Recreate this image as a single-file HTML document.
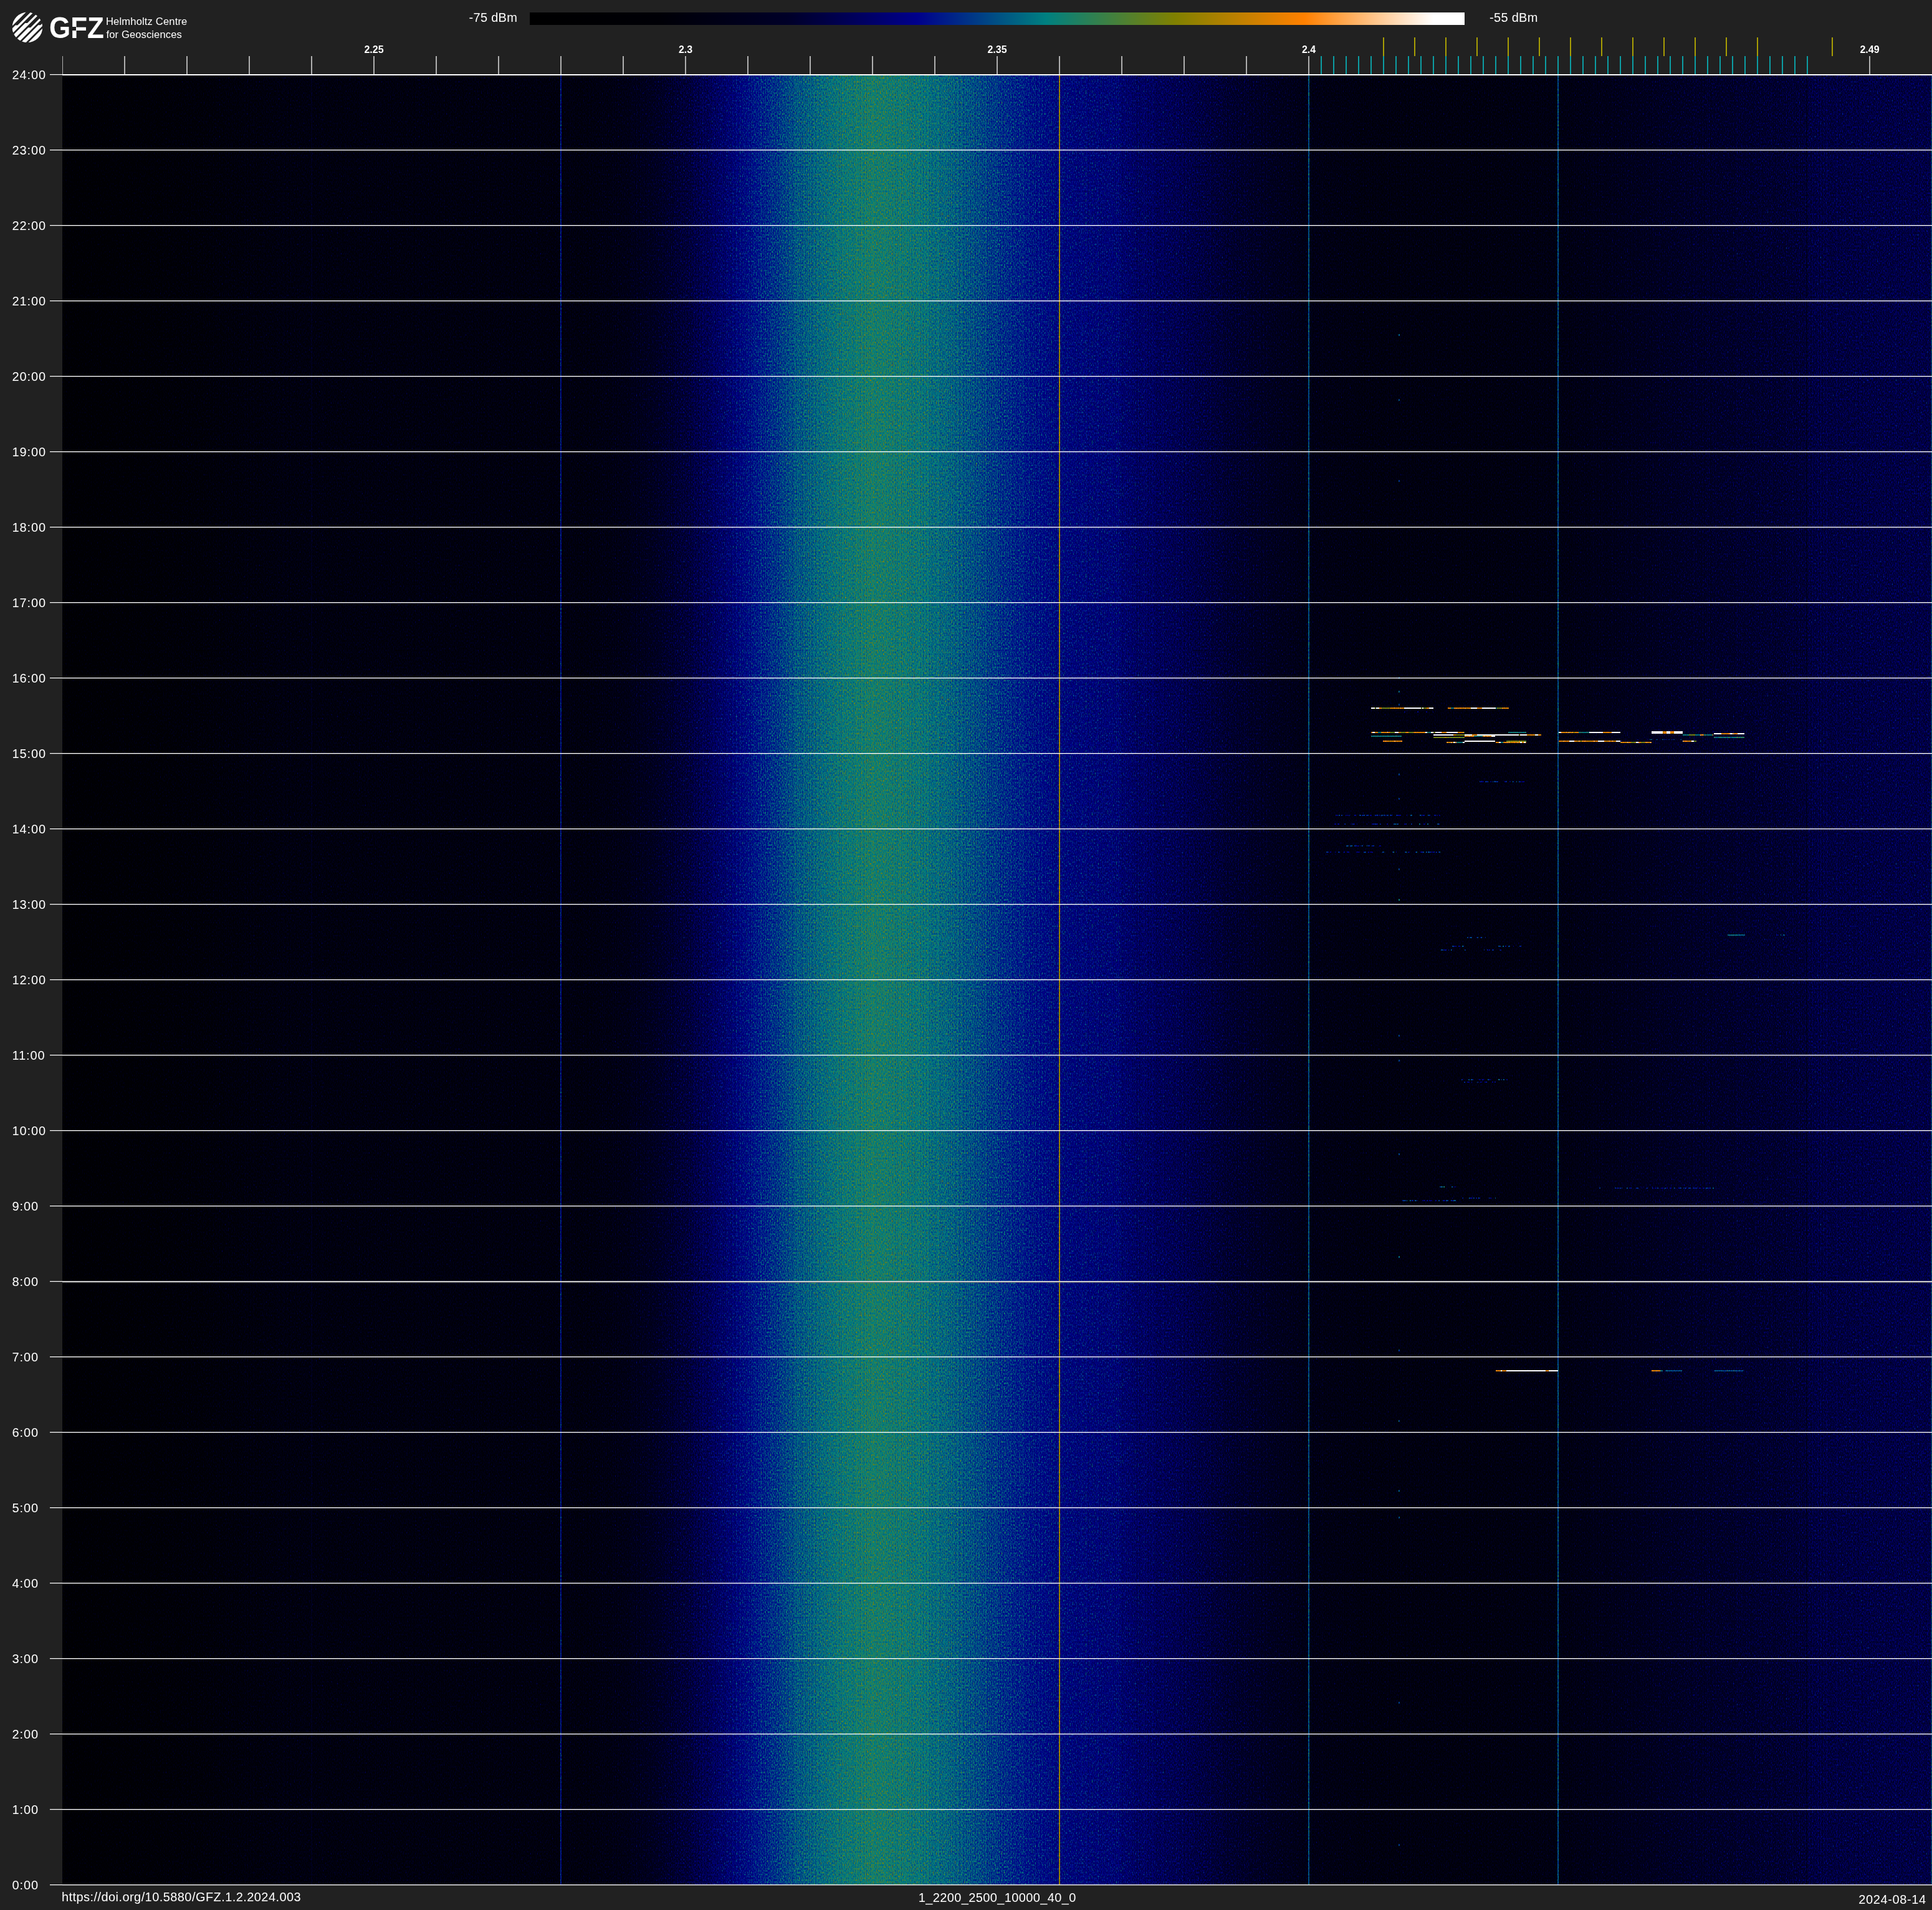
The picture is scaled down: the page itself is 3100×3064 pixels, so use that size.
<!DOCTYPE html><html><head><meta charset="utf-8"><title>Spectrogram 2024-08-14</title><style>html,body{margin:0;padding:0;background:#212121;}
body{width:3100px;height:3064px;position:relative;overflow:hidden;font-family:"Liberation Sans",sans-serif;color:#fff;}
#tx{position:absolute;left:0;top:0;width:3100px;height:3064px;will-change:transform;}
.t{position:absolute;white-space:nowrap;font-size:20px;line-height:20px;}
.h{left:19.5px;letter-spacing:0.9px;}
.f{font-weight:bold;font-size:16px;line-height:16px;width:100px;text-align:center;}
</style></head><body>
<svg width="3100" height="3064" viewBox="0 0 3100 3064" style="position:absolute;left:0;top:0"><defs><linearGradient id="prof" x1="0" y1="0" x2="1" y2="0"><stop offset="0.000000" stop-color="rgb(57,57,57)"/><stop offset="0.066667" stop-color="rgb(65,65,65)"/><stop offset="0.116667" stop-color="rgb(71,71,71)"/><stop offset="0.266667" stop-color="rgb(71,71,71)"/><stop offset="0.283333" stop-color="rgb(72,72,72)"/><stop offset="0.300000" stop-color="rgb(76,76,76)"/><stop offset="0.316667" stop-color="rgb(84,84,84)"/><stop offset="0.333333" stop-color="rgb(94,94,94)"/><stop offset="0.353333" stop-color="rgb(107,107,107)"/><stop offset="0.373333" stop-color="rgb(122,122,122)"/><stop offset="0.393333" stop-color="rgb(134,134,134)"/><stop offset="0.413333" stop-color="rgb(142,142,142)"/><stop offset="0.433333" stop-color="rgb(147,147,147)"/><stop offset="0.453333" stop-color="rgb(144,144,144)"/><stop offset="0.473333" stop-color="rgb(138,138,138)"/><stop offset="0.493333" stop-color="rgb(130,130,130)"/><stop offset="0.513333" stop-color="rgb(122,122,122)"/><stop offset="0.533333" stop-color="rgb(114,114,114)"/><stop offset="0.566333" stop-color="rgb(111,111,111)"/><stop offset="0.566667" stop-color="rgb(108,108,108)"/><stop offset="0.600000" stop-color="rgb(100,100,100)"/><stop offset="0.633333" stop-color="rgb(88,88,88)"/><stop offset="0.666667" stop-color="rgb(76,76,76)"/><stop offset="0.700000" stop-color="rgb(72,72,72)"/><stop offset="0.766667" stop-color="rgb(72,72,72)"/><stop offset="0.800000" stop-color="rgb(74,74,74)"/><stop offset="0.833333" stop-color="rgb(80,80,80)"/><stop offset="0.866667" stop-color="rgb(86,86,86)"/><stop offset="0.933000" stop-color="rgb(93,93,93)"/><stop offset="0.933333" stop-color="rgb(96,96,96)"/><stop offset="0.966667" stop-color="rgb(97,97,97)"/><stop offset="1.000000" stop-color="rgb(98,98,98)"/></linearGradient><linearGradient id="cb" x1="0" y1="0" x2="1" y2="0"><stop offset="0.00000" stop-color="rgb(0,0,0)"/><stop offset="0.13810" stop-color="rgb(0,0,6)"/><stop offset="0.27619" stop-color="rgb(0,0,40)"/><stop offset="0.41429" stop-color="rgb(0,0,139)"/><stop offset="0.55238" stop-color="rgb(0,128,128)"/><stop offset="0.69048" stop-color="rgb(128,128,0)"/><stop offset="0.82857" stop-color="rgb(255,128,0)"/><stop offset="0.96667" stop-color="rgb(255,255,255)"/><stop offset="1.00000" stop-color="rgb(255,255,255)"/></linearGradient><filter id="spec" x="0" y="0" width="100%" height="100%" filterUnits="objectBoundingBox" color-interpolation-filters="sRGB">
<feTurbulence type="fractalNoise" baseFrequency="0.80 0.33" numOctaves="1" seed="7" result="t"/>
<feComponentTransfer in="t" result="tg"><feFuncR type="gamma" amplitude="1" exponent="3" offset="0"/></feComponentTransfer>
<feColorMatrix in="tg" type="matrix" values="1 0 0 0 0  1 0 0 0 0  1 0 0 0 0  0 0 0 0 1" result="n"/>
<feTurbulence type="fractalNoise" baseFrequency="0.71 0.0004" numOctaves="1" seed="3" x="100" y="120" width="3000" height="4" result="t2s"/>
<feTile in="t2s" x="100" y="120" width="3000" height="2904" result="t2"/>
<feColorMatrix in="t2" type="matrix" values="1 0 0 0 0  1 0 0 0 0  1 0 0 0 0  0 0 0 0 1" result="n2"/>
<feComposite in="SourceGraphic" in2="n" operator="arithmetic" k1="0" k2="1" k3="0.3111" k4="-0.0439" result="s1"/>
<feComposite in="s1" in2="n2" operator="arithmetic" k1="0" k2="1" k3="0.1111" k4="-0.0556" result="s"/>
<feComponentTransfer in="s">
<feFuncR type="table" tableValues="0.0000 0.0000 0.0000 0.0000 0.0000 0.0000 0.0000 0.0000 0.0000 0.0000 0.0000 0.0000 0.0000 0.0000 0.0000 0.0000 0.0000 0.0000 0.0000 0.0000 0.0000 0.0000 0.0000 0.0000 0.0000 0.0000 0.0000 0.0000 0.0000 0.0000 0.0000 0.0000 0.0000 0.0000 0.0000 0.0000 0.0000 0.0000 0.0000 0.0000 0.0000 0.0000 0.0000 0.0000 0.0000 0.0000 0.0000 0.0000 0.0000 0.0000 0.0000 0.0000 0.0000 0.0000 0.0000 0.0000 0.0000 0.0000 0.0000 0.0000 0.0000 0.0000 0.0000 0.0000 0.0000 0.0000 0.0000 0.0000 0.0000 0.0000 0.0000 0.0000 0.0000 0.0000 0.0000 0.0000 0.0000 0.0000 0.0000 0.0000 0.0000 0.0000 0.0000 0.0000 0.0000 0.0000 0.0000 0.0000 0.0000 0.0000 0.0254 0.0561 0.0868 0.1174 0.1481 0.1788 0.2094 0.2401 0.2708 0.3014 0.3321 0.3628 0.3935 0.4241 0.4548 0.4855 0.5160 0.5465 0.5769 0.6073 0.6377 0.6682 0.6986 0.7290 0.7595 0.7899 0.8203 0.8507 0.8812 0.9116 0.9420 0.9725 1.0000 1.0000 1.0000 1.0000 1.0000 1.0000 1.0000 1.0000 1.0000 1.0000 1.0000 1.0000 1.0000 1.0000 1.0000 1.0000 1.0000 1.0000 1.0000 1.0000 1.0000 1.0000 1.0000 1.0000 1.0000 1.0000 1.0000 1.0000 1.0000 1.0000 1.0000 1.0000 1.0000 1.0000 1.0000 1.0000 1.0000 1.0000 1.0000"/>
<feFuncG type="table" tableValues="0.0000 0.0000 0.0000 0.0000 0.0000 0.0000 0.0000 0.0000 0.0000 0.0000 0.0000 0.0000 0.0000 0.0000 0.0000 0.0000 0.0000 0.0000 0.0000 0.0000 0.0000 0.0000 0.0000 0.0000 0.0000 0.0000 0.0000 0.0000 0.0000 0.0000 0.0000 0.0000 0.0000 0.0000 0.0000 0.0000 0.0000 0.0000 0.0000 0.0000 0.0000 0.0000 0.0000 0.0000 0.0000 0.0000 0.0000 0.0000 0.0000 0.0000 0.0000 0.0000 0.0000 0.0000 0.0000 0.0000 0.0000 0.0000 0.0000 0.0000 0.0000 0.0000 0.0000 0.0000 0.0000 0.0000 0.0000 0.0000 0.0000 0.0000 0.0000 0.0000 0.0000 0.0060 0.0367 0.0673 0.0980 0.1287 0.1594 0.1900 0.2207 0.2514 0.2820 0.3127 0.3434 0.3740 0.4047 0.4354 0.4660 0.4967 0.5020 0.5020 0.5020 0.5020 0.5020 0.5020 0.5020 0.5020 0.5020 0.5020 0.5020 0.5020 0.5020 0.5020 0.5020 0.5020 0.5020 0.5020 0.5020 0.5020 0.5020 0.5020 0.5020 0.5020 0.5020 0.5020 0.5020 0.5020 0.5020 0.5020 0.5020 0.5020 0.5049 0.5353 0.5657 0.5961 0.6266 0.6570 0.6874 0.7179 0.7483 0.7787 0.8092 0.8396 0.8700 0.9004 0.9309 0.9613 0.9917 1.0000 1.0000 1.0000 1.0000 1.0000 1.0000 1.0000 1.0000 1.0000 1.0000 1.0000 1.0000 1.0000 1.0000 1.0000 1.0000 1.0000 1.0000 1.0000 1.0000 1.0000 1.0000"/>
<feFuncB type="table" tableValues="0.0000 0.0000 0.0000 0.0000 0.0000 0.0000 0.0000 0.0000 0.0000 0.0000 0.0000 0.0000 0.0000 0.0000 0.0000 0.0000 0.0000 0.0000 0.0000 0.0000 0.0000 0.0000 0.0000 0.0000 0.0004 0.0019 0.0033 0.0047 0.0062 0.0076 0.0091 0.0105 0.0119 0.0134 0.0148 0.0162 0.0177 0.0191 0.0206 0.0220 0.0234 0.0311 0.0392 0.0474 0.0555 0.0637 0.0718 0.0800 0.0881 0.0963 0.1044 0.1126 0.1207 0.1289 0.1370 0.1452 0.1533 0.1702 0.1939 0.2177 0.2414 0.2651 0.2888 0.3125 0.3363 0.3600 0.3837 0.4074 0.4311 0.4549 0.4786 0.5023 0.5260 0.5446 0.5419 0.5393 0.5367 0.5340 0.5314 0.5288 0.5261 0.5235 0.5209 0.5182 0.5156 0.5130 0.5103 0.5077 0.5050 0.5024 0.4765 0.4459 0.4152 0.3845 0.3539 0.3232 0.2925 0.2619 0.2312 0.2005 0.1698 0.1392 0.1085 0.0778 0.0472 0.0165 0.0000 0.0000 0.0000 0.0000 0.0000 0.0000 0.0000 0.0000 0.0000 0.0000 0.0000 0.0000 0.0000 0.0000 0.0000 0.0000 0.0058 0.0669 0.1280 0.1891 0.2502 0.3113 0.3724 0.4335 0.4946 0.5557 0.6168 0.6779 0.7390 0.8001 0.8612 0.9223 0.9834 1.0000 1.0000 1.0000 1.0000 1.0000 1.0000 1.0000 1.0000 1.0000 1.0000 1.0000 1.0000 1.0000 1.0000 1.0000 1.0000 1.0000 1.0000 1.0000 1.0000 1.0000 1.0000"/>
</feComponentTransfer>
</filter><clipPath id="lc"><circle cx="43.9" cy="43.9" r="24.2"/></clipPath></defs><rect x="850" y="20" width="1500" height="20" fill="url(#cb)"/><g filter="url(#spec)" shape-rendering="crispEdges"><rect x="100" y="120" width="3000" height="2904" fill="url(#prof)"/><rect x="499" y="120" width="2" height="2904" fill="rgb(79,79,79)"/><rect x="899" y="120" width="1" height="2904" fill="rgb(124,124,124)"/><rect x="900" y="120" width="1" height="2904" fill="rgb(114,114,114)"/><rect x="1699" y="120" width="2" height="2904" fill="rgb(172,172,172)"/><rect x="2099" y="120" width="2" height="2904" fill="rgb(132,132,132)"/><rect x="2499" y="120" width="2" height="2904" fill="rgb(132,132,132)"/><rect x="2899" y="120" width="1" height="2904" fill="rgb(76,76,76)"/><rect x="3099" y="120" width="1" height="2904" fill="rgb(136,136,136)"/><rect x="2200" y="1135" width="6" height="2" fill="rgb(236,236,236)"/><rect x="2206" y="1135" width="2" height="2" fill="rgb(166,166,166)"/><rect x="2208" y="1135" width="5" height="2" fill="rgb(236,236,236)"/><rect x="2213" y="1135" width="4" height="2" fill="rgb(189,189,189)"/><rect x="2217" y="1135" width="14" height="2" fill="rgb(166,166,166)"/><rect x="2231" y="1135" width="10" height="2" fill="rgb(189,189,189)"/><rect x="2241" y="1135" width="5" height="2" fill="rgb(189,189,189)"/><rect x="2246" y="1135" width="3" height="2" fill="rgb(189,189,189)"/><rect x="2249" y="1135" width="4" height="2" fill="rgb(189,189,189)"/><rect x="2253" y="1135" width="10" height="2" fill="rgb(236,236,236)"/><rect x="2263" y="1135" width="3" height="2" fill="rgb(236,236,236)"/><rect x="2266" y="1135" width="14" height="2" fill="rgb(236,236,236)"/><rect x="2280" y="1135" width="2" height="2" fill="rgb(166,166,166)"/><rect x="2282" y="1135" width="2" height="2" fill="rgb(236,236,236)"/><rect x="2284" y="1135" width="5" height="2" fill="rgb(166,166,166)"/><rect x="2289" y="1135" width="4" height="2" fill="rgb(189,189,189)"/><rect x="2293" y="1135" width="6" height="2" fill="rgb(236,236,236)"/><rect x="2299" y="1135" width="1" height="2" fill="rgb(236,236,236)"/><rect x="2323" y="1135" width="5" height="2" fill="rgb(189,189,189)"/><rect x="2328" y="1135" width="5" height="2" fill="rgb(142,142,142)"/><rect x="2333" y="1135" width="10" height="2" fill="rgb(189,189,189)"/><rect x="2343" y="1135" width="8" height="2" fill="rgb(189,189,189)"/><rect x="2351" y="1135" width="4" height="2" fill="rgb(189,189,189)"/><rect x="2355" y="1135" width="5" height="2" fill="rgb(189,189,189)"/><rect x="2360" y="1135" width="2" height="2" fill="rgb(236,236,236)"/><rect x="2362" y="1135" width="8" height="2" fill="rgb(236,236,236)"/><rect x="2370" y="1135" width="8" height="2" fill="rgb(189,189,189)"/><rect x="2378" y="1135" width="14" height="2" fill="rgb(236,236,236)"/><rect x="2392" y="1135" width="4" height="2" fill="rgb(236,236,236)"/><rect x="2396" y="1135" width="4" height="2" fill="rgb(236,236,236)"/><rect x="2400" y="1135" width="2" height="2" fill="rgb(142,142,142)"/><rect x="2402" y="1135" width="8" height="2" fill="rgb(166,166,166)"/><rect x="2410" y="1135" width="2" height="2" fill="rgb(189,189,189)"/><rect x="2412" y="1135" width="9" height="2" fill="rgb(189,189,189)"/><rect x="2200" y="1174" width="2" height="2" fill="rgb(189,189,189)"/><rect x="2202" y="1174" width="4" height="2" fill="rgb(236,236,236)"/><rect x="2206" y="1174" width="5" height="2" fill="rgb(189,189,189)"/><rect x="2211" y="1174" width="5" height="2" fill="rgb(142,142,142)"/><rect x="2216" y="1174" width="14" height="2" fill="rgb(189,189,189)"/><rect x="2230" y="1174" width="8" height="2" fill="rgb(166,166,166)"/><rect x="2238" y="1174" width="6" height="2" fill="rgb(236,236,236)"/><rect x="2244" y="1174" width="3" height="2" fill="rgb(189,189,189)"/><rect x="2247" y="1174" width="8" height="2" fill="rgb(166,166,166)"/><rect x="2255" y="1174" width="2" height="2" fill="rgb(189,189,189)"/><rect x="2257" y="1174" width="3" height="2" fill="rgb(189,189,189)"/><rect x="2260" y="1174" width="8" height="2" fill="rgb(166,166,166)"/><rect x="2268" y="1174" width="8" height="2" fill="rgb(189,189,189)"/><rect x="2276" y="1174" width="3" height="2" fill="rgb(189,189,189)"/><rect x="2279" y="1174" width="8" height="2" fill="rgb(189,189,189)"/><rect x="2287" y="1174" width="3" height="2" fill="rgb(236,236,236)"/><rect x="2290" y="1174" width="6" height="2" fill="rgb(142,142,142)"/><rect x="2296" y="1174" width="4" height="2" fill="rgb(236,236,236)"/><rect x="2300" y="1174" width="3" height="2" fill="rgb(166,166,166)"/><rect x="2303" y="1174" width="10" height="2" fill="rgb(236,236,236)"/><rect x="2313" y="1174" width="8" height="2" fill="rgb(189,189,189)"/><rect x="2321" y="1174" width="14" height="2" fill="rgb(236,236,236)"/><rect x="2335" y="1174" width="4" height="2" fill="rgb(236,236,236)"/><rect x="2339" y="1174" width="2" height="2" fill="rgb(189,189,189)"/><rect x="2341" y="1174" width="8" height="2" fill="rgb(189,189,189)"/><rect x="2349" y="1174" width="1" height="2" fill="rgb(166,166,166)"/><rect x="2420" y="1174" width="29" height="2" fill="rgb(142,142,142)"/><rect x="2501" y="1174" width="4" height="2" fill="rgb(236,236,236)"/><rect x="2505" y="1174" width="10" height="2" fill="rgb(189,189,189)"/><rect x="2515" y="1174" width="10" height="2" fill="rgb(189,189,189)"/><rect x="2525" y="1174" width="2" height="2" fill="rgb(166,166,166)"/><rect x="2527" y="1174" width="6" height="2" fill="rgb(189,189,189)"/><rect x="2533" y="1174" width="4" height="2" fill="rgb(142,142,142)"/><rect x="2537" y="1174" width="13" height="2" fill="rgb(142,142,142)"/><rect x="2550" y="1174" width="8" height="2" fill="rgb(236,236,236)"/><rect x="2558" y="1174" width="6" height="2" fill="rgb(236,236,236)"/><rect x="2564" y="1174" width="4" height="2" fill="rgb(236,236,236)"/><rect x="2568" y="1174" width="4" height="2" fill="rgb(236,236,236)"/><rect x="2572" y="1174" width="14" height="2" fill="rgb(189,189,189)"/><rect x="2586" y="1174" width="4" height="2" fill="rgb(236,236,236)"/><rect x="2590" y="1174" width="6" height="2" fill="rgb(236,236,236)"/><rect x="2596" y="1174" width="4" height="2" fill="rgb(236,236,236)"/><rect x="2650" y="1173" width="8" height="4" fill="rgb(236,236,236)"/><rect x="2658" y="1173" width="2" height="4" fill="rgb(236,236,236)"/><rect x="2660" y="1173" width="8" height="4" fill="rgb(236,236,236)"/><rect x="2668" y="1173" width="6" height="4" fill="rgb(189,189,189)"/><rect x="2674" y="1173" width="6" height="4" fill="rgb(236,236,236)"/><rect x="2680" y="1173" width="6" height="4" fill="rgb(189,189,189)"/><rect x="2686" y="1173" width="8" height="4" fill="rgb(236,236,236)"/><rect x="2694" y="1173" width="2" height="4" fill="rgb(236,236,236)"/><rect x="2696" y="1173" width="4" height="4" fill="rgb(236,236,236)"/><rect x="2300" y="1178" width="6" height="2" fill="rgb(236,236,236)"/><rect x="2306" y="1178" width="8" height="2" fill="rgb(236,236,236)"/><rect x="2314" y="1178" width="8" height="2" fill="rgb(236,236,236)"/><rect x="2322" y="1178" width="10" height="2" fill="rgb(236,236,236)"/><rect x="2332" y="1178" width="4" height="2" fill="rgb(189,189,189)"/><rect x="2336" y="1178" width="14" height="2" fill="rgb(166,166,166)"/><rect x="2350" y="1178" width="8" height="2" fill="rgb(236,236,236)"/><rect x="2358" y="1178" width="4" height="2" fill="rgb(236,236,236)"/><rect x="2362" y="1178" width="8" height="2" fill="rgb(189,189,189)"/><rect x="2370" y="1178" width="14" height="2" fill="rgb(236,236,236)"/><rect x="2384" y="1178" width="3" height="2" fill="rgb(236,236,236)"/><rect x="2387" y="1178" width="10" height="2" fill="rgb(236,236,236)"/><rect x="2397" y="1178" width="10" height="2" fill="rgb(236,236,236)"/><rect x="2407" y="1178" width="6" height="2" fill="rgb(236,236,236)"/><rect x="2413" y="1178" width="2" height="2" fill="rgb(236,236,236)"/><rect x="2415" y="1178" width="14" height="2" fill="rgb(236,236,236)"/><rect x="2429" y="1178" width="4" height="2" fill="rgb(236,236,236)"/><rect x="2433" y="1178" width="4" height="2" fill="rgb(236,236,236)"/><rect x="2437" y="1178" width="2" height="2" fill="rgb(166,166,166)"/><rect x="2439" y="1178" width="5" height="2" fill="rgb(236,236,236)"/><rect x="2444" y="1178" width="4" height="2" fill="rgb(236,236,236)"/><rect x="2448" y="1178" width="2" height="2" fill="rgb(236,236,236)"/><rect x="2450" y="1178" width="2" height="2" fill="rgb(189,189,189)"/><rect x="2452" y="1178" width="8" height="2" fill="rgb(189,189,189)"/><rect x="2460" y="1178" width="3" height="2" fill="rgb(189,189,189)"/><rect x="2463" y="1178" width="5" height="2" fill="rgb(236,236,236)"/><rect x="2468" y="1178" width="5" height="2" fill="rgb(189,189,189)"/><rect x="2700" y="1178" width="10" height="2" fill="rgb(142,142,142)"/><rect x="2710" y="1178" width="10" height="2" fill="rgb(166,166,166)"/><rect x="2720" y="1178" width="8" height="2" fill="rgb(142,142,142)"/><rect x="2728" y="1178" width="6" height="2" fill="rgb(189,189,189)"/><rect x="2734" y="1178" width="8" height="2" fill="rgb(142,142,142)"/><rect x="2742" y="1178" width="6" height="2" fill="rgb(142,142,142)"/><rect x="2748" y="1178" width="1" height="2" fill="rgb(189,189,189)"/><rect x="2750" y="1176" width="8" height="2" fill="rgb(236,236,236)"/><rect x="2758" y="1176" width="4" height="2" fill="rgb(236,236,236)"/><rect x="2762" y="1176" width="14" height="2" fill="rgb(189,189,189)"/><rect x="2776" y="1176" width="4" height="2" fill="rgb(236,236,236)"/><rect x="2780" y="1176" width="8" height="2" fill="rgb(189,189,189)"/><rect x="2788" y="1176" width="2" height="2" fill="rgb(236,236,236)"/><rect x="2790" y="1176" width="8" height="2" fill="rgb(236,236,236)"/><rect x="2798" y="1176" width="1" height="2" fill="rgb(236,236,236)"/><rect x="2200" y="1180" width="49" height="2" fill="rgb(142,142,142)"/><rect x="2350" y="1180" width="10" height="2" fill="rgb(189,189,189)"/><rect x="2360" y="1180" width="5" height="2" fill="rgb(189,189,189)"/><rect x="2365" y="1180" width="14" height="2" fill="rgb(142,142,142)"/><rect x="2379" y="1180" width="10" height="2" fill="rgb(189,189,189)"/><rect x="2389" y="1180" width="4" height="2" fill="rgb(189,189,189)"/><rect x="2393" y="1180" width="6" height="2" fill="rgb(236,236,236)"/><rect x="2300" y="1182" width="50" height="2" fill="rgb(166,166,166)"/><rect x="2750" y="1182" width="49" height="2" fill="rgb(142,142,142)"/><rect x="2219" y="1188" width="6" height="2" fill="rgb(189,189,189)"/><rect x="2225" y="1188" width="10" height="2" fill="rgb(189,189,189)"/><rect x="2235" y="1188" width="6" height="2" fill="rgb(189,189,189)"/><rect x="2241" y="1188" width="6" height="2" fill="rgb(189,189,189)"/><rect x="2247" y="1188" width="2" height="2" fill="rgb(189,189,189)"/><rect x="2249" y="1188" width="1" height="2" fill="rgb(189,189,189)"/><rect x="2350" y="1188" width="2" height="2" fill="rgb(236,236,236)"/><rect x="2352" y="1188" width="10" height="2" fill="rgb(236,236,236)"/><rect x="2362" y="1188" width="6" height="2" fill="rgb(236,236,236)"/><rect x="2368" y="1188" width="14" height="2" fill="rgb(236,236,236)"/><rect x="2382" y="1188" width="5" height="2" fill="rgb(236,236,236)"/><rect x="2387" y="1188" width="4" height="2" fill="rgb(236,236,236)"/><rect x="2391" y="1188" width="6" height="2" fill="rgb(236,236,236)"/><rect x="2397" y="1188" width="2" height="2" fill="rgb(236,236,236)"/><rect x="2417" y="1188" width="32" height="2" fill="rgb(166,166,166)"/><rect x="2501" y="1188" width="3" height="2" fill="rgb(189,189,189)"/><rect x="2504" y="1188" width="4" height="2" fill="rgb(189,189,189)"/><rect x="2508" y="1188" width="8" height="2" fill="rgb(189,189,189)"/><rect x="2516" y="1188" width="2" height="2" fill="rgb(189,189,189)"/><rect x="2518" y="1188" width="8" height="2" fill="rgb(236,236,236)"/><rect x="2526" y="1188" width="4" height="2" fill="rgb(189,189,189)"/><rect x="2530" y="1188" width="6" height="2" fill="rgb(189,189,189)"/><rect x="2536" y="1188" width="3" height="2" fill="rgb(166,166,166)"/><rect x="2539" y="1188" width="5" height="2" fill="rgb(189,189,189)"/><rect x="2544" y="1188" width="6" height="2" fill="rgb(189,189,189)"/><rect x="2550" y="1188" width="14" height="2" fill="rgb(189,189,189)"/><rect x="2564" y="1188" width="10" height="2" fill="rgb(236,236,236)"/><rect x="2574" y="1188" width="5" height="2" fill="rgb(189,189,189)"/><rect x="2579" y="1188" width="14" height="2" fill="rgb(189,189,189)"/><rect x="2593" y="1188" width="3" height="2" fill="rgb(236,236,236)"/><rect x="2596" y="1188" width="2" height="2" fill="rgb(236,236,236)"/><rect x="2598" y="1188" width="2" height="2" fill="rgb(236,236,236)"/><rect x="2700" y="1188" width="14" height="2" fill="rgb(189,189,189)"/><rect x="2714" y="1188" width="4" height="2" fill="rgb(236,236,236)"/><rect x="2718" y="1188" width="4" height="2" fill="rgb(166,166,166)"/><rect x="2321" y="1190" width="4" height="2" fill="rgb(189,189,189)"/><rect x="2325" y="1190" width="2" height="2" fill="rgb(189,189,189)"/><rect x="2327" y="1190" width="5" height="2" fill="rgb(189,189,189)"/><rect x="2332" y="1190" width="3" height="2" fill="rgb(236,236,236)"/><rect x="2335" y="1190" width="2" height="2" fill="rgb(189,189,189)"/><rect x="2337" y="1190" width="10" height="2" fill="rgb(142,142,142)"/><rect x="2347" y="1190" width="3" height="2" fill="rgb(236,236,236)"/><rect x="2400" y="1190" width="2" height="2" fill="rgb(189,189,189)"/><rect x="2402" y="1190" width="3" height="2" fill="rgb(189,189,189)"/><rect x="2405" y="1190" width="3" height="2" fill="rgb(236,236,236)"/><rect x="2408" y="1190" width="4" height="2" fill="rgb(142,142,142)"/><rect x="2412" y="1190" width="14" height="2" fill="rgb(189,189,189)"/><rect x="2426" y="1190" width="4" height="2" fill="rgb(189,189,189)"/><rect x="2430" y="1190" width="4" height="2" fill="rgb(189,189,189)"/><rect x="2434" y="1190" width="5" height="2" fill="rgb(189,189,189)"/><rect x="2439" y="1190" width="3" height="2" fill="rgb(236,236,236)"/><rect x="2442" y="1190" width="3" height="2" fill="rgb(189,189,189)"/><rect x="2445" y="1190" width="3" height="2" fill="rgb(236,236,236)"/><rect x="2448" y="1190" width="1" height="2" fill="rgb(189,189,189)"/><rect x="2600" y="1190" width="3" height="2" fill="rgb(189,189,189)"/><rect x="2603" y="1190" width="14" height="2" fill="rgb(189,189,189)"/><rect x="2617" y="1190" width="8" height="2" fill="rgb(166,166,166)"/><rect x="2625" y="1190" width="4" height="2" fill="rgb(236,236,236)"/><rect x="2629" y="1190" width="4" height="2" fill="rgb(189,189,189)"/><rect x="2633" y="1190" width="6" height="2" fill="rgb(166,166,166)"/><rect x="2639" y="1190" width="5" height="2" fill="rgb(189,189,189)"/><rect x="2644" y="1190" width="5" height="2" fill="rgb(189,189,189)"/><rect x="2649" y="1190" width="1" height="2" fill="rgb(189,189,189)"/><rect x="2627" y="1186" width="2" height="1" fill="rgb(126,126,126)"/><rect x="2647" y="1186" width="4" height="1" fill="rgb(134,134,134)"/><rect x="2657" y="1186" width="3" height="1" fill="rgb(132,132,132)"/><rect x="2667" y="1186" width="2" height="1" fill="rgb(129,129,129)"/><rect x="2670" y="1186" width="2" height="1" fill="rgb(117,117,117)"/><rect x="2672" y="1186" width="2" height="1" fill="rgb(116,116,116)"/><rect x="2677" y="1186" width="2" height="1" fill="rgb(126,126,126)"/><rect x="2682" y="1186" width="2" height="1" fill="rgb(117,117,117)"/><rect x="2685" y="1186" width="2" height="1" fill="rgb(135,135,135)"/><rect x="2696" y="1186" width="2" height="1" fill="rgb(136,136,136)"/><rect x="2400" y="2198" width="8" height="2" fill="rgb(189,189,189)"/><rect x="2408" y="2198" width="2" height="2" fill="rgb(236,236,236)"/><rect x="2410" y="2198" width="7" height="2" fill="rgb(189,189,189)"/><rect x="2417" y="2198" width="4" height="2" fill="rgb(236,236,236)"/><rect x="2421" y="2198" width="8" height="2" fill="rgb(236,236,236)"/><rect x="2429" y="2198" width="5" height="2" fill="rgb(236,236,236)"/><rect x="2434" y="2198" width="4" height="2" fill="rgb(236,236,236)"/><rect x="2438" y="2198" width="2" height="2" fill="rgb(236,236,236)"/><rect x="2440" y="2198" width="3" height="2" fill="rgb(236,236,236)"/><rect x="2443" y="2198" width="8" height="2" fill="rgb(236,236,236)"/><rect x="2451" y="2198" width="4" height="2" fill="rgb(236,236,236)"/><rect x="2455" y="2198" width="6" height="2" fill="rgb(236,236,236)"/><rect x="2461" y="2198" width="14" height="2" fill="rgb(236,236,236)"/><rect x="2475" y="2198" width="5" height="2" fill="rgb(236,236,236)"/><rect x="2480" y="2198" width="5" height="2" fill="rgb(189,189,189)"/><rect x="2485" y="2198" width="10" height="2" fill="rgb(236,236,236)"/><rect x="2495" y="2198" width="5" height="2" fill="rgb(236,236,236)"/><rect x="2650" y="2198" width="2" height="2" fill="rgb(189,189,189)"/><rect x="2652" y="2198" width="10" height="2" fill="rgb(189,189,189)"/><rect x="2662" y="2198" width="2" height="2" fill="rgb(189,189,189)"/><rect x="2664" y="2198" width="4" height="2" fill="rgb(142,142,142)"/><rect x="2672" y="2198" width="27" height="2" fill="rgb(132,132,132)"/><rect x="2750" y="2198" width="47" height="2" fill="rgb(132,132,132)"/><rect x="2374" y="1253" width="1" height="2" fill="rgb(128,128,128)"/><rect x="2375" y="1253" width="3" height="2" fill="rgb(115,115,115)"/><rect x="2378" y="1253" width="3" height="2" fill="rgb(111,111,111)"/><rect x="2383" y="1253" width="3" height="2" fill="rgb(124,124,124)"/><rect x="2386" y="1253" width="2" height="2" fill="rgb(121,121,121)"/><rect x="2391" y="1253" width="2" height="2" fill="rgb(111,111,111)"/><rect x="2395" y="1253" width="1" height="2" fill="rgb(132,132,132)"/><rect x="2397" y="1253" width="4" height="2" fill="rgb(126,126,126)"/><rect x="2401" y="1253" width="3" height="2" fill="rgb(121,121,121)"/><rect x="2414" y="1253" width="4" height="2" fill="rgb(117,117,117)"/><rect x="2422" y="1253" width="2" height="2" fill="rgb(111,111,111)"/><rect x="2427" y="1253" width="2" height="2" fill="rgb(125,125,125)"/><rect x="2433" y="1253" width="1" height="2" fill="rgb(127,127,127)"/><rect x="2437" y="1253" width="4" height="2" fill="rgb(116,116,116)"/><rect x="2442" y="1253" width="4" height="2" fill="rgb(113,113,113)"/><rect x="2143" y="1307" width="4" height="2" fill="rgb(111,111,111)"/><rect x="2148" y="1307" width="2" height="2" fill="rgb(125,125,125)"/><rect x="2152" y="1307" width="1" height="2" fill="rgb(127,127,127)"/><rect x="2153" y="1307" width="1" height="2" fill="rgb(132,132,132)"/><rect x="2159" y="1307" width="2" height="2" fill="rgb(112,112,112)"/><rect x="2162" y="1307" width="2" height="2" fill="rgb(113,113,113)"/><rect x="2165" y="1307" width="1" height="2" fill="rgb(123,123,123)"/><rect x="2173" y="1307" width="3" height="2" fill="rgb(117,117,117)"/><rect x="2181" y="1307" width="3" height="2" fill="rgb(125,125,125)"/><rect x="2185" y="1307" width="4" height="2" fill="rgb(121,121,121)"/><rect x="2189" y="1307" width="1" height="2" fill="rgb(129,129,129)"/><rect x="2192" y="1307" width="4" height="2" fill="rgb(126,126,126)"/><rect x="2198" y="1307" width="3" height="2" fill="rgb(114,114,114)"/><rect x="2206" y="1307" width="2" height="2" fill="rgb(128,128,128)"/><rect x="2208" y="1307" width="4" height="2" fill="rgb(117,117,117)"/><rect x="2213" y="1307" width="2" height="2" fill="rgb(110,110,110)"/><rect x="2216" y="1307" width="3" height="2" fill="rgb(126,126,126)"/><rect x="2220" y="1307" width="2" height="2" fill="rgb(120,120,120)"/><rect x="2222" y="1307" width="2" height="2" fill="rgb(110,110,110)"/><rect x="2225" y="1307" width="3" height="2" fill="rgb(125,125,125)"/><rect x="2230" y="1307" width="4" height="2" fill="rgb(120,120,120)"/><rect x="2240" y="1307" width="4" height="2" fill="rgb(119,119,119)"/><rect x="2244" y="1307" width="4" height="2" fill="rgb(116,116,116)"/><rect x="2257" y="1307" width="1" height="2" fill="rgb(112,112,112)"/><rect x="2263" y="1307" width="3" height="2" fill="rgb(130,130,130)"/><rect x="2278" y="1307" width="3" height="2" fill="rgb(124,124,124)"/><rect x="2282" y="1307" width="4" height="2" fill="rgb(117,117,117)"/><rect x="2291" y="1307" width="2" height="2" fill="rgb(116,116,116)"/><rect x="2293" y="1307" width="2" height="2" fill="rgb(119,119,119)"/><rect x="2301" y="1307" width="3" height="2" fill="rgb(121,121,121)"/><rect x="2305" y="1307" width="2" height="2" fill="rgb(111,111,111)"/><rect x="2309" y="1307" width="2" height="2" fill="rgb(113,113,113)"/><rect x="2141" y="1321" width="3" height="2" fill="rgb(123,123,123)"/><rect x="2146" y="1321" width="1" height="2" fill="rgb(121,121,121)"/><rect x="2147" y="1321" width="2" height="2" fill="rgb(120,120,120)"/><rect x="2157" y="1321" width="1" height="2" fill="rgb(125,125,125)"/><rect x="2158" y="1321" width="1" height="2" fill="rgb(118,118,118)"/><rect x="2167" y="1321" width="2" height="2" fill="rgb(111,111,111)"/><rect x="2170" y="1321" width="2" height="2" fill="rgb(120,120,120)"/><rect x="2172" y="1321" width="2" height="2" fill="rgb(122,122,122)"/><rect x="2177" y="1321" width="1" height="2" fill="rgb(123,123,123)"/><rect x="2193" y="1321" width="1" height="2" fill="rgb(120,120,120)"/><rect x="2201" y="1321" width="2" height="2" fill="rgb(121,121,121)"/><rect x="2203" y="1321" width="4" height="2" fill="rgb(119,119,119)"/><rect x="2207" y="1321" width="4" height="2" fill="rgb(115,115,115)"/><rect x="2214" y="1321" width="2" height="2" fill="rgb(112,112,112)"/><rect x="2225" y="1321" width="2" height="2" fill="rgb(118,118,118)"/><rect x="2236" y="1321" width="4" height="2" fill="rgb(132,132,132)"/><rect x="2241" y="1321" width="3" height="2" fill="rgb(121,121,121)"/><rect x="2253" y="1321" width="4" height="2" fill="rgb(113,113,113)"/><rect x="2264" y="1321" width="2" height="2" fill="rgb(127,127,127)"/><rect x="2277" y="1321" width="2" height="2" fill="rgb(127,127,127)"/><rect x="2284" y="1321" width="3" height="2" fill="rgb(116,116,116)"/><rect x="2290" y="1321" width="2" height="2" fill="rgb(125,125,125)"/><rect x="2306" y="1321" width="3" height="2" fill="rgb(130,130,130)"/><rect x="2309" y="1321" width="1" height="2" fill="rgb(119,119,119)"/><rect x="2128" y="1366" width="2" height="2" fill="rgb(132,132,132)"/><rect x="2130" y="1366" width="2" height="2" fill="rgb(124,124,124)"/><rect x="2134" y="1366" width="2" height="2" fill="rgb(120,120,120)"/><rect x="2142" y="1366" width="2" height="2" fill="rgb(110,110,110)"/><rect x="2147" y="1366" width="2" height="2" fill="rgb(125,125,125)"/><rect x="2149" y="1366" width="1" height="2" fill="rgb(114,114,114)"/><rect x="2156" y="1366" width="2" height="2" fill="rgb(121,121,121)"/><rect x="2161" y="1366" width="4" height="2" fill="rgb(120,120,120)"/><rect x="2176" y="1366" width="3" height="2" fill="rgb(113,113,113)"/><rect x="2179" y="1366" width="3" height="2" fill="rgb(114,114,114)"/><rect x="2188" y="1366" width="4" height="2" fill="rgb(119,119,119)"/><rect x="2195" y="1366" width="2" height="2" fill="rgb(110,110,110)"/><rect x="2198" y="1366" width="4" height="2" fill="rgb(111,111,111)"/><rect x="2202" y="1366" width="1" height="2" fill="rgb(113,113,113)"/><rect x="2218" y="1366" width="3" height="2" fill="rgb(127,127,127)"/><rect x="2234" y="1366" width="3" height="2" fill="rgb(128,128,128)"/><rect x="2240" y="1366" width="1" height="2" fill="rgb(119,119,119)"/><rect x="2254" y="1366" width="1" height="2" fill="rgb(120,120,120)"/><rect x="2255" y="1366" width="2" height="2" fill="rgb(127,127,127)"/><rect x="2259" y="1366" width="3" height="2" fill="rgb(110,110,110)"/><rect x="2271" y="1366" width="3" height="2" fill="rgb(124,124,124)"/><rect x="2279" y="1366" width="3" height="2" fill="rgb(118,118,118)"/><rect x="2282" y="1366" width="3" height="2" fill="rgb(121,121,121)"/><rect x="2288" y="1366" width="2" height="2" fill="rgb(130,130,130)"/><rect x="2291" y="1366" width="4" height="2" fill="rgb(123,123,123)"/><rect x="2295" y="1366" width="2" height="2" fill="rgb(122,122,122)"/><rect x="2298" y="1366" width="4" height="2" fill="rgb(113,113,113)"/><rect x="2304" y="1366" width="2" height="2" fill="rgb(112,112,112)"/><rect x="2308" y="1366" width="3" height="2" fill="rgb(130,130,130)"/><rect x="2354" y="1503" width="2" height="2" fill="rgb(129,129,129)"/><rect x="2358" y="1503" width="4" height="2" fill="rgb(127,127,127)"/><rect x="2369" y="1503" width="1" height="2" fill="rgb(117,117,117)"/><rect x="2370" y="1503" width="2" height="2" fill="rgb(126,126,126)"/><rect x="2375" y="1503" width="3" height="2" fill="rgb(116,116,116)"/><rect x="2383" y="1503" width="1" height="2" fill="rgb(111,111,111)"/><rect x="2330" y="1517" width="3" height="2" fill="rgb(127,127,127)"/><rect x="2333" y="1517" width="4" height="2" fill="rgb(111,111,111)"/><rect x="2340" y="1517" width="3" height="2" fill="rgb(117,117,117)"/><rect x="2346" y="1517" width="3" height="2" fill="rgb(130,130,130)"/><rect x="2404" y="1517" width="2" height="2" fill="rgb(128,128,128)"/><rect x="2406" y="1517" width="2" height="2" fill="rgb(129,129,129)"/><rect x="2411" y="1517" width="2" height="2" fill="rgb(130,130,130)"/><rect x="2415" y="1517" width="2" height="2" fill="rgb(124,124,124)"/><rect x="2420" y="1517" width="3" height="2" fill="rgb(126,126,126)"/><rect x="2428" y="1517" width="1" height="2" fill="rgb(115,115,115)"/><rect x="2438" y="1517" width="3" height="2" fill="rgb(123,123,123)"/><rect x="2312" y="1523" width="4" height="2" fill="rgb(129,129,129)"/><rect x="2317" y="1523" width="4" height="2" fill="rgb(119,119,119)"/><rect x="2324" y="1523" width="1" height="2" fill="rgb(113,113,113)"/><rect x="2328" y="1523" width="2" height="2" fill="rgb(129,129,129)"/><rect x="2350" y="1523" width="2" height="2" fill="rgb(122,122,122)"/><rect x="2381" y="1523" width="1" height="2" fill="rgb(123,123,123)"/><rect x="2386" y="1523" width="2" height="2" fill="rgb(120,120,120)"/><rect x="2389" y="1523" width="2" height="2" fill="rgb(120,120,120)"/><rect x="2394" y="1523" width="3" height="2" fill="rgb(121,121,121)"/><rect x="2406" y="1523" width="3" height="2" fill="rgb(111,111,111)"/><rect x="2850" y="1499" width="2" height="2" fill="rgb(118,118,118)"/><rect x="2852" y="1499" width="2" height="2" fill="rgb(110,110,110)"/><rect x="2857" y="1499" width="1" height="2" fill="rgb(126,126,126)"/><rect x="2861" y="1499" width="3" height="2" fill="rgb(131,131,131)"/><rect x="2867" y="1499" width="1" height="2" fill="rgb(119,119,119)"/><rect x="2253" y="1141" width="2" height="2" fill="rgb(110,110,110)"/><rect x="2274" y="1141" width="2" height="2" fill="rgb(123,123,123)"/><rect x="2288" y="1141" width="2" height="2" fill="rgb(113,113,113)"/><rect x="2299" y="1141" width="1" height="2" fill="rgb(110,110,110)"/><rect x="2160" y="1356" width="4" height="2" fill="rgb(130,130,130)"/><rect x="2166" y="1356" width="4" height="2" fill="rgb(130,130,130)"/><rect x="2173" y="1356" width="2" height="2" fill="rgb(122,122,122)"/><rect x="2175" y="1356" width="2" height="2" fill="rgb(112,112,112)"/><rect x="2177" y="1356" width="4" height="2" fill="rgb(111,111,111)"/><rect x="2183" y="1356" width="1" height="2" fill="rgb(117,117,117)"/><rect x="2185" y="1356" width="2" height="2" fill="rgb(127,127,127)"/><rect x="2193" y="1356" width="1" height="2" fill="rgb(129,129,129)"/><rect x="2195" y="1356" width="3" height="2" fill="rgb(119,119,119)"/><rect x="2201" y="1356" width="4" height="2" fill="rgb(125,125,125)"/><rect x="2213" y="1356" width="3" height="2" fill="rgb(117,117,117)"/><rect x="2345" y="1731" width="2" height="2" fill="rgb(129,129,129)"/><rect x="2356" y="1731" width="2" height="2" fill="rgb(128,128,128)"/><rect x="2360" y="1731" width="4" height="2" fill="rgb(129,129,129)"/><rect x="2373" y="1731" width="3" height="2" fill="rgb(111,111,111)"/><rect x="2378" y="1731" width="1" height="2" fill="rgb(118,118,118)"/><rect x="2379" y="1731" width="2" height="2" fill="rgb(113,113,113)"/><rect x="2387" y="1731" width="2" height="2" fill="rgb(124,124,124)"/><rect x="2389" y="1731" width="3" height="2" fill="rgb(113,113,113)"/><rect x="2404" y="1731" width="2" height="2" fill="rgb(132,132,132)"/><rect x="2406" y="1731" width="1" height="2" fill="rgb(116,116,116)"/><rect x="2409" y="1731" width="1" height="2" fill="rgb(129,129,129)"/><rect x="2412" y="1731" width="2" height="2" fill="rgb(128,128,128)"/><rect x="2417" y="1731" width="2" height="2" fill="rgb(113,113,113)"/><rect x="2349" y="1735" width="2" height="2" fill="rgb(124,124,124)"/><rect x="2354" y="1735" width="4" height="2" fill="rgb(112,112,112)"/><rect x="2361" y="1735" width="1" height="2" fill="rgb(114,114,114)"/><rect x="2370" y="1735" width="1" height="2" fill="rgb(123,123,123)"/><rect x="2372" y="1735" width="1" height="2" fill="rgb(121,121,121)"/><rect x="2375" y="1735" width="3" height="2" fill="rgb(111,111,111)"/><rect x="2382" y="1735" width="2" height="2" fill="rgb(110,110,110)"/><rect x="2384" y="1735" width="2" height="2" fill="rgb(125,125,125)"/><rect x="2394" y="1735" width="2" height="2" fill="rgb(113,113,113)"/><rect x="2398" y="1735" width="2" height="2" fill="rgb(114,114,114)"/><rect x="2310" y="1903" width="2" height="2" fill="rgb(125,125,125)"/><rect x="2312" y="1903" width="3" height="2" fill="rgb(126,126,126)"/><rect x="2316" y="1903" width="2" height="2" fill="rgb(131,131,131)"/><rect x="2329" y="1903" width="2" height="2" fill="rgb(124,124,124)"/><rect x="2333" y="1903" width="3" height="2" fill="rgb(110,110,110)"/><rect x="2330" y="1921" width="1" height="2" fill="rgb(114,114,114)"/><rect x="2346" y="1921" width="2" height="2" fill="rgb(114,114,114)"/><rect x="2357" y="1921" width="4" height="2" fill="rgb(121,121,121)"/><rect x="2361" y="1921" width="2" height="2" fill="rgb(113,113,113)"/><rect x="2364" y="1921" width="2" height="2" fill="rgb(129,129,129)"/><rect x="2368" y="1921" width="2" height="2" fill="rgb(122,122,122)"/><rect x="2372" y="1921" width="3" height="2" fill="rgb(122,122,122)"/><rect x="2389" y="1921" width="4" height="2" fill="rgb(116,116,116)"/><rect x="2399" y="1921" width="1" height="2" fill="rgb(132,132,132)"/><rect x="2566" y="1905" width="2" height="2" fill="rgb(125,125,125)"/><rect x="2591" y="1905" width="3" height="2" fill="rgb(121,121,121)"/><rect x="2595" y="1905" width="3" height="2" fill="rgb(121,121,121)"/><rect x="2599" y="1905" width="2" height="2" fill="rgb(126,126,126)"/><rect x="2602" y="1905" width="1" height="2" fill="rgb(120,120,120)"/><rect x="2610" y="1905" width="2" height="2" fill="rgb(125,125,125)"/><rect x="2614" y="1905" width="3" height="2" fill="rgb(114,114,114)"/><rect x="2617" y="1905" width="1" height="2" fill="rgb(127,127,127)"/><rect x="2625" y="1905" width="4" height="2" fill="rgb(124,124,124)"/><rect x="2634" y="1905" width="1" height="2" fill="rgb(111,111,111)"/><rect x="2642" y="1905" width="2" height="2" fill="rgb(125,125,125)"/><rect x="2651" y="1905" width="2" height="2" fill="rgb(115,115,115)"/><rect x="2655" y="1905" width="3" height="2" fill="rgb(112,112,112)"/><rect x="2659" y="1905" width="2" height="2" fill="rgb(127,127,127)"/><rect x="2665" y="1905" width="4" height="2" fill="rgb(112,112,112)"/><rect x="2671" y="1905" width="1" height="2" fill="rgb(127,127,127)"/><rect x="2672" y="1905" width="1" height="2" fill="rgb(127,127,127)"/><rect x="2674" y="1905" width="2" height="2" fill="rgb(114,114,114)"/><rect x="2679" y="1905" width="3" height="2" fill="rgb(112,112,112)"/><rect x="2686" y="1905" width="2" height="2" fill="rgb(120,120,120)"/><rect x="2693" y="1905" width="2" height="2" fill="rgb(119,119,119)"/><rect x="2695" y="1905" width="3" height="2" fill="rgb(126,126,126)"/><rect x="2701" y="1905" width="1" height="2" fill="rgb(127,127,127)"/><rect x="2703" y="1905" width="3" height="2" fill="rgb(123,123,123)"/><rect x="2709" y="1905" width="4" height="2" fill="rgb(125,125,125)"/><rect x="2716" y="1905" width="4" height="2" fill="rgb(114,114,114)"/><rect x="2720" y="1905" width="1" height="2" fill="rgb(119,119,119)"/><rect x="2721" y="1905" width="3" height="2" fill="rgb(115,115,115)"/><rect x="2726" y="1905" width="3" height="2" fill="rgb(115,115,115)"/><rect x="2732" y="1905" width="3" height="2" fill="rgb(116,116,116)"/><rect x="2737" y="1905" width="3" height="2" fill="rgb(130,130,130)"/><rect x="2740" y="1905" width="2" height="2" fill="rgb(119,119,119)"/><rect x="2743" y="1905" width="2" height="2" fill="rgb(125,125,125)"/><rect x="2748" y="1905" width="2" height="2" fill="rgb(131,131,131)"/><rect x="2250" y="1925" width="3" height="2" fill="rgb(120,120,120)"/><rect x="2253" y="1925" width="3" height="2" fill="rgb(131,131,131)"/><rect x="2257" y="1925" width="1" height="2" fill="rgb(124,124,124)"/><rect x="2262" y="1925" width="2" height="2" fill="rgb(127,127,127)"/><rect x="2265" y="1925" width="3" height="2" fill="rgb(118,118,118)"/><rect x="2270" y="1925" width="3" height="2" fill="rgb(131,131,131)"/><rect x="2274" y="1925" width="1" height="2" fill="rgb(111,111,111)"/><rect x="2282" y="1925" width="1" height="2" fill="rgb(114,114,114)"/><rect x="2284" y="1925" width="3" height="2" fill="rgb(110,110,110)"/><rect x="2289" y="1925" width="2" height="2" fill="rgb(119,119,119)"/><rect x="2293" y="1925" width="2" height="2" fill="rgb(113,113,113)"/><rect x="2295" y="1925" width="3" height="2" fill="rgb(112,112,112)"/><rect x="2303" y="1925" width="2" height="2" fill="rgb(117,117,117)"/><rect x="2308" y="1925" width="2" height="2" fill="rgb(131,131,131)"/><rect x="2315" y="1925" width="4" height="2" fill="rgb(119,119,119)"/><rect x="2320" y="1925" width="4" height="2" fill="rgb(125,125,125)"/><rect x="2328" y="1925" width="4" height="2" fill="rgb(119,119,119)"/><rect x="2332" y="1925" width="4" height="2" fill="rgb(132,132,132)"/><rect x="2772" y="1499" width="28" height="2" fill="rgb(136,136,136)"/><rect x="2244" y="1086" width="2" height="3" fill="rgb(132,132,132)"/><rect x="2244" y="1108" width="2" height="3" fill="rgb(132,132,132)"/><rect x="2244" y="1129" width="2" height="3" fill="rgb(132,132,132)"/><rect x="2244" y="1241" width="2" height="3" fill="rgb(132,132,132)"/><rect x="2244" y="1280" width="2" height="3" fill="rgb(132,132,132)"/><rect x="2244" y="1393" width="2" height="3" fill="rgb(132,132,132)"/><rect x="2244" y="1442" width="2" height="3" fill="rgb(132,132,132)"/><rect x="2244" y="1660" width="2" height="3" fill="rgb(132,132,132)"/><rect x="2244" y="1700" width="2" height="3" fill="rgb(132,132,132)"/><rect x="2244" y="1850" width="2" height="3" fill="rgb(132,132,132)"/><rect x="2244" y="2015" width="2" height="3" fill="rgb(132,132,132)"/><rect x="2244" y="2165" width="2" height="3" fill="rgb(132,132,132)"/><rect x="2244" y="2278" width="2" height="3" fill="rgb(132,132,132)"/><rect x="2244" y="2390" width="2" height="3" fill="rgb(132,132,132)"/><rect x="2244" y="2433" width="2" height="3" fill="rgb(132,132,132)"/><rect x="2244" y="2730" width="2" height="3" fill="rgb(132,132,132)"/><rect x="2244" y="2958" width="2" height="3" fill="rgb(132,132,132)"/><rect x="2244" y="536" width="2" height="3" fill="rgb(132,132,132)"/><rect x="2244" y="640" width="2" height="3" fill="rgb(132,132,132)"/><rect x="2244" y="770" width="2" height="3" fill="rgb(132,132,132)"/></g><g shape-rendering="crispEdges"><rect x="80" y="119" width="3020" height="1" fill="#fff"/><rect x="80" y="120" width="20" height="1" fill="#fff" opacity="0.25"/><rect x="100" y="120" width="3000" height="1" fill="#fff" opacity="1"/><rect x="80" y="240" width="3020" height="1" fill="#fff"/><rect x="80" y="241" width="20" height="1" fill="#fff" opacity="0.25"/><rect x="100" y="241" width="3000" height="1" fill="#fff" opacity="0.35"/><rect x="80" y="361" width="3020" height="1" fill="#fff"/><rect x="80" y="362" width="20" height="1" fill="#fff" opacity="0.25"/><rect x="100" y="362" width="3000" height="1" fill="#fff" opacity="0.35"/><rect x="80" y="482" width="3020" height="1" fill="#fff"/><rect x="80" y="483" width="20" height="1" fill="#fff" opacity="0.25"/><rect x="100" y="483" width="3000" height="1" fill="#fff" opacity="0.35"/><rect x="80" y="603" width="3020" height="1" fill="#fff"/><rect x="80" y="604" width="20" height="1" fill="#fff" opacity="0.25"/><rect x="100" y="604" width="3000" height="1" fill="#fff" opacity="0.35"/><rect x="80" y="724" width="3020" height="1" fill="#fff"/><rect x="80" y="725" width="20" height="1" fill="#fff" opacity="0.25"/><rect x="100" y="725" width="3000" height="1" fill="#fff" opacity="0.35"/><rect x="80" y="845" width="3020" height="1" fill="#fff"/><rect x="80" y="846" width="20" height="1" fill="#fff" opacity="0.25"/><rect x="100" y="846" width="3000" height="1" fill="#fff" opacity="0.35"/><rect x="80" y="966" width="3020" height="1" fill="#fff"/><rect x="80" y="967" width="20" height="1" fill="#fff" opacity="0.25"/><rect x="100" y="967" width="3000" height="1" fill="#fff" opacity="0.35"/><rect x="80" y="1087" width="3020" height="1" fill="#fff"/><rect x="80" y="1088" width="20" height="1" fill="#fff" opacity="0.25"/><rect x="100" y="1088" width="3000" height="1" fill="#fff" opacity="0.35"/><rect x="80" y="1208" width="3020" height="1" fill="#fff"/><rect x="80" y="1209" width="20" height="1" fill="#fff" opacity="0.25"/><rect x="100" y="1209" width="3000" height="1" fill="#fff" opacity="0.35"/><rect x="80" y="1329" width="3020" height="1" fill="#fff"/><rect x="80" y="1330" width="20" height="1" fill="#fff" opacity="0.25"/><rect x="100" y="1330" width="3000" height="1" fill="#fff" opacity="0.35"/><rect x="80" y="1450" width="3020" height="1" fill="#fff"/><rect x="80" y="1451" width="20" height="1" fill="#fff" opacity="0.25"/><rect x="100" y="1451" width="3000" height="1" fill="#fff" opacity="0.35"/><rect x="80" y="1571" width="3020" height="1" fill="#fff"/><rect x="80" y="1572" width="20" height="1" fill="#fff" opacity="0.25"/><rect x="100" y="1572" width="3000" height="1" fill="#fff" opacity="0.35"/><rect x="80" y="1692" width="3020" height="1" fill="#fff"/><rect x="80" y="1693" width="20" height="1" fill="#fff" opacity="0.25"/><rect x="100" y="1693" width="3000" height="1" fill="#fff" opacity="0.35"/><rect x="80" y="1813" width="3020" height="1" fill="#fff"/><rect x="80" y="1814" width="20" height="1" fill="#fff" opacity="0.25"/><rect x="100" y="1814" width="3000" height="1" fill="#fff" opacity="0.35"/><rect x="80" y="1934" width="3020" height="1" fill="#fff"/><rect x="80" y="1935" width="20" height="1" fill="#fff" opacity="0.25"/><rect x="100" y="1935" width="3000" height="1" fill="#fff" opacity="0.35"/><rect x="80" y="2055" width="3020" height="1" fill="#fff"/><rect x="80" y="2056" width="20" height="1" fill="#fff" opacity="0.25"/><rect x="100" y="2056" width="3000" height="1" fill="#fff" opacity="0.35"/><rect x="80" y="2176" width="3020" height="1" fill="#fff"/><rect x="80" y="2177" width="20" height="1" fill="#fff" opacity="0.25"/><rect x="100" y="2177" width="3000" height="1" fill="#fff" opacity="0.35"/><rect x="80" y="2297" width="3020" height="1" fill="#fff"/><rect x="80" y="2298" width="20" height="1" fill="#fff" opacity="0.25"/><rect x="100" y="2298" width="3000" height="1" fill="#fff" opacity="0.35"/><rect x="80" y="2418" width="3020" height="1" fill="#fff"/><rect x="80" y="2419" width="20" height="1" fill="#fff" opacity="0.25"/><rect x="100" y="2419" width="3000" height="1" fill="#fff" opacity="0.35"/><rect x="80" y="2539" width="3020" height="1" fill="#fff"/><rect x="80" y="2540" width="20" height="1" fill="#fff" opacity="0.25"/><rect x="100" y="2540" width="3000" height="1" fill="#fff" opacity="0.35"/><rect x="80" y="2660" width="3020" height="1" fill="#fff"/><rect x="80" y="2661" width="20" height="1" fill="#fff" opacity="0.25"/><rect x="100" y="2661" width="3000" height="1" fill="#fff" opacity="0.35"/><rect x="80" y="2781" width="3020" height="1" fill="#fff"/><rect x="80" y="2782" width="20" height="1" fill="#fff" opacity="0.25"/><rect x="100" y="2782" width="3000" height="1" fill="#fff" opacity="0.35"/><rect x="80" y="2902" width="3020" height="1" fill="#fff"/><rect x="80" y="2903" width="20" height="1" fill="#fff" opacity="0.25"/><rect x="100" y="2903" width="3000" height="1" fill="#fff" opacity="0.35"/><rect x="80" y="3023" width="3020" height="1" fill="#fff"/><rect x="80" y="3024" width="20" height="1" fill="#fff" opacity="0.25"/><rect x="100" y="3024" width="3000" height="1" fill="#fff" opacity="0.35"/><rect x="100" y="2056" width="3000" height="1" fill="#8c8c8c"/><rect x="100" y="2057" width="3000" height="1" fill="#8c8c8c" opacity="0.6"/><rect x="100" y="90" width="1" height="29" fill="#b0b0b0"/><rect x="199" y="90" width="2" height="29" fill="#b0b0b0"/><rect x="299" y="90" width="2" height="29" fill="#b0b0b0"/><rect x="399" y="90" width="2" height="29" fill="#b0b0b0"/><rect x="499" y="90" width="2" height="29" fill="#b0b0b0"/><rect x="599" y="90" width="2" height="29" fill="#b0b0b0"/><rect x="699" y="90" width="2" height="29" fill="#b0b0b0"/><rect x="799" y="90" width="2" height="29" fill="#b0b0b0"/><rect x="899" y="90" width="2" height="29" fill="#b0b0b0"/><rect x="999" y="90" width="2" height="29" fill="#b0b0b0"/><rect x="1099" y="90" width="2" height="29" fill="#b0b0b0"/><rect x="1199" y="90" width="2" height="29" fill="#b0b0b0"/><rect x="1299" y="90" width="2" height="29" fill="#b0b0b0"/><rect x="1399" y="90" width="2" height="29" fill="#b0b0b0"/><rect x="1499" y="90" width="2" height="29" fill="#b0b0b0"/><rect x="1599" y="90" width="2" height="29" fill="#b0b0b0"/><rect x="1699" y="90" width="2" height="29" fill="#b0b0b0"/><rect x="1799" y="90" width="2" height="29" fill="#b0b0b0"/><rect x="1899" y="90" width="2" height="29" fill="#b0b0b0"/><rect x="1999" y="90" width="2" height="29" fill="#b0b0b0"/><rect x="2099" y="90" width="2" height="29" fill="#b0b0b0"/><rect x="2199" y="90" width="2" height="29" fill="#b0b0b0"/><rect x="2299" y="90" width="2" height="29" fill="#b0b0b0"/><rect x="2399" y="90" width="2" height="29" fill="#b0b0b0"/><rect x="2499" y="90" width="2" height="29" fill="#b0b0b0"/><rect x="2599" y="90" width="2" height="29" fill="#b0b0b0"/><rect x="2699" y="90" width="2" height="29" fill="#b0b0b0"/><rect x="2799" y="90" width="2" height="29" fill="#b0b0b0"/><rect x="2899" y="90" width="2" height="29" fill="#b0b0b0"/><rect x="2999" y="90" width="2" height="29" fill="#b0b0b0"/><rect x="2119" y="90" width="2" height="29" fill="#0c9ea4"/><rect x="2139" y="90" width="2" height="29" fill="#0c9ea4"/><rect x="2159" y="90" width="2" height="29" fill="#0c9ea4"/><rect x="2179" y="90" width="2" height="29" fill="#0c9ea4"/><rect x="2199" y="90" width="2" height="29" fill="#0c9ea4"/><rect x="2219" y="90" width="2" height="29" fill="#0c9ea4"/><rect x="2239" y="90" width="2" height="29" fill="#0c9ea4"/><rect x="2259" y="90" width="2" height="29" fill="#0c9ea4"/><rect x="2279" y="90" width="2" height="29" fill="#0c9ea4"/><rect x="2299" y="90" width="2" height="29" fill="#0c9ea4"/><rect x="2319" y="90" width="2" height="29" fill="#0c9ea4"/><rect x="2339" y="90" width="2" height="29" fill="#0c9ea4"/><rect x="2359" y="90" width="2" height="29" fill="#0c9ea4"/><rect x="2379" y="90" width="2" height="29" fill="#0c9ea4"/><rect x="2399" y="90" width="2" height="29" fill="#0c9ea4"/><rect x="2419" y="90" width="2" height="29" fill="#0c9ea4"/><rect x="2439" y="90" width="2" height="29" fill="#0c9ea4"/><rect x="2459" y="90" width="2" height="29" fill="#0c9ea4"/><rect x="2479" y="90" width="2" height="29" fill="#0c9ea4"/><rect x="2499" y="90" width="2" height="29" fill="#0c9ea4"/><rect x="2519" y="90" width="2" height="29" fill="#0c9ea4"/><rect x="2539" y="90" width="2" height="29" fill="#0c9ea4"/><rect x="2559" y="90" width="2" height="29" fill="#0c9ea4"/><rect x="2579" y="90" width="2" height="29" fill="#0c9ea4"/><rect x="2599" y="90" width="2" height="29" fill="#0c9ea4"/><rect x="2619" y="90" width="2" height="29" fill="#0c9ea4"/><rect x="2639" y="90" width="2" height="29" fill="#0c9ea4"/><rect x="2659" y="90" width="2" height="29" fill="#0c9ea4"/><rect x="2679" y="90" width="2" height="29" fill="#0c9ea4"/><rect x="2699" y="90" width="2" height="29" fill="#0c9ea4"/><rect x="2719" y="90" width="2" height="29" fill="#0c9ea4"/><rect x="2739" y="90" width="2" height="29" fill="#0c9ea4"/><rect x="2759" y="90" width="2" height="29" fill="#0c9ea4"/><rect x="2779" y="90" width="2" height="29" fill="#0c9ea4"/><rect x="2799" y="90" width="2" height="29" fill="#0c9ea4"/><rect x="2819" y="90" width="2" height="29" fill="#0c9ea4"/><rect x="2839" y="90" width="2" height="29" fill="#0c9ea4"/><rect x="2859" y="90" width="2" height="29" fill="#0c9ea4"/><rect x="2879" y="90" width="2" height="29" fill="#0c9ea4"/><rect x="2899" y="90" width="2" height="29" fill="#0c9ea4"/><rect x="2219" y="60" width="2" height="30" fill="#a89e04"/><rect x="2269" y="60" width="2" height="30" fill="#a89e04"/><rect x="2319" y="60" width="2" height="30" fill="#a89e04"/><rect x="2369" y="60" width="2" height="30" fill="#a89e04"/><rect x="2419" y="60" width="2" height="30" fill="#a89e04"/><rect x="2469" y="60" width="2" height="30" fill="#a89e04"/><rect x="2519" y="60" width="2" height="30" fill="#a89e04"/><rect x="2569" y="60" width="2" height="30" fill="#a89e04"/><rect x="2619" y="60" width="2" height="30" fill="#a89e04"/><rect x="2669" y="60" width="2" height="30" fill="#a89e04"/><rect x="2719" y="60" width="2" height="30" fill="#a89e04"/><rect x="2769" y="60" width="2" height="30" fill="#a89e04"/><rect x="2819" y="60" width="2" height="30" fill="#a89e04"/><rect x="2939" y="60" width="2" height="30" fill="#a89e04"/></g><mask id="lm" maskUnits="userSpaceOnUse" x="0" y="0" width="90" height="90"><rect x="0" y="0" width="90" height="90" fill="#fff"/><polygon fill="#000" points="-18.85,80.00 61.15,0.00 68.65,0.00 28.25,40.40 24.65,40.40 -14.95,80.00"/><polygon fill="#000" points="-6.45,80.00 73.55,0.00 81.05,0.00 43.95,37.10 40.35,37.10 -2.55,80.00"/><polygon fill="#000" points="5.65,80.00 85.65,0.00 93.15,0.00 48.95,44.20 45.35,44.20 9.55,80.00"/><polygon fill="#000" points="17.75,80.00 97.75,0.00 105.25,0.00 65.05,40.20 61.45,40.20 21.65,80.00"/><polygon fill="#000" points="29.84,80.00 109.84,0.00 117.34,0.00 112.34,5.00 108.74,5.00 33.74,80.00"/></mask><circle cx="43.9" cy="43.9" r="24.3" fill="#fff" mask="url(#lm)"/></svg>
<div id="tx">
<div class="t" id="gfz" style="left:78.9px;top:20.6px;font-size:48px;line-height:48px;font-weight:bold;transform-origin:0 0;transform:scaleX(0.915)">GFZ</div>
<div style="position:absolute;left:113.5px;top:43.1px;width:8.6px;height:5.6px;background:#212121"></div>
<div class="t" id="hc1" style="left:170px;top:26.2px;font-size:16.6px;line-height:18px;letter-spacing:0.14px">Helmholtz Centre</div>
<div class="t" id="hc2" style="left:170.5px;top:47px;font-size:16.6px;line-height:18px;letter-spacing:0.1px">for Geosciences</div>
<div class="t" id="l75" style="left:752.5px;top:18.4px;letter-spacing:0.3px">-75 dBm</div>
<div class="t" id="l55" style="left:2390px;top:18.4px;letter-spacing:0.3px">-55 dBm</div>
<div class="t f" style="left:550px;top:72px">2.25</div>
<div class="t f" style="left:1050px;top:72px">2.3</div>
<div class="t f" style="left:1550px;top:72px">2.35</div>
<div class="t f" style="left:2050px;top:72px">2.4</div>
<div class="t f" style="left:2950px;top:72px">2.49</div>
<div class="t h" style="top:110px">24:00</div>
<div class="t h" style="top:231px">23:00</div>
<div class="t h" style="top:352px">22:00</div>
<div class="t h" style="top:473px">21:00</div>
<div class="t h" style="top:594px">20:00</div>
<div class="t h" style="top:715px">19:00</div>
<div class="t h" style="top:836px">18:00</div>
<div class="t h" style="top:957px">17:00</div>
<div class="t h" style="top:1078px">16:00</div>
<div class="t h" style="top:1199px">15:00</div>
<div class="t h" style="top:1320px">14:00</div>
<div class="t h" style="top:1441px">13:00</div>
<div class="t h" style="top:1562px">12:00</div>
<div class="t h" style="top:1683px">11:00</div>
<div class="t h" style="top:1804px">10:00</div>
<div class="t h" style="top:1925px">9:00</div>
<div class="t h" style="top:2046px">8:00</div>
<div class="t h" style="top:2167px">7:00</div>
<div class="t h" style="top:2288px">6:00</div>
<div class="t h" style="top:2409px">5:00</div>
<div class="t h" style="top:2530px">4:00</div>
<div class="t h" style="top:2651px">3:00</div>
<div class="t h" style="top:2772px">2:00</div>
<div class="t h" style="top:2893px">1:00</div>
<div class="t h" style="top:3014px">0:00</div>
<div class="t" id="doi" style="left:99px;top:3033px;letter-spacing:0.43px">https://doi.org/10.5880/GFZ.1.2.2024.003</div>
<div class="t" id="nm" style="left:1400px;width:400.4px;text-align:center;top:3034px;letter-spacing:0.38px">1_2200_2500_10000_40_0</div>
<div class="t" id="dt" style="right:9.4px;top:3037px;letter-spacing:0.6px">2024-08-14</div>
</div>
</body></html>
